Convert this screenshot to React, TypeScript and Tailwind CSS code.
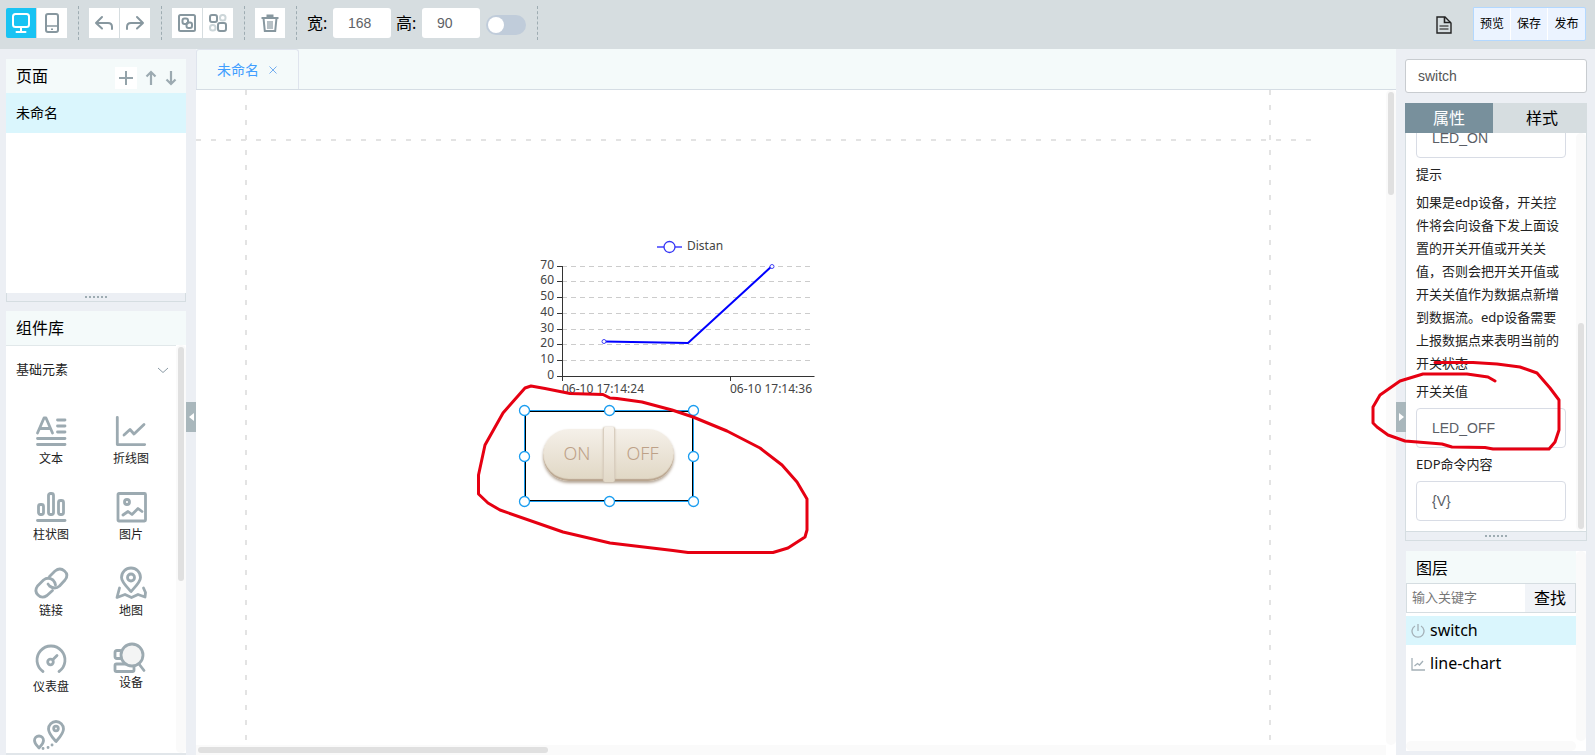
import React from "react";

type IconProps = { className?: string };

const cjk = "font-['Noto_Sans','Noto_Sans_CJK_SC',sans-serif]";
const arial = "font-['Liberation_Sans','Noto_Sans_CJK_SC',sans-serif]";

/* ---------- toolbar icons ---------- */

function DesktopIcon() {
  return (
    <svg width="20" height="20" viewBox="0 0 20 20" fill="none" stroke="currentColor" strokeWidth="2" strokeLinecap="round">
      <rect x="2" y="1" width="16" height="13" rx="2.5" />
      <path d="M10 14v4M5.500 19h9" />
    </svg>
  );
}

function PhoneIcon() {
  return (
    <svg width="20" height="20" viewBox="0 0 20 20" fill="none" stroke="currentColor" strokeWidth="2">
      <rect x="4" y="1" width="12" height="18" rx="2" />
      <path d="M4 13h12" strokeWidth="1.500" />
      <path d="M9 16.200h2" strokeWidth="1.500" />
    </svg>
  );
}

function UndoIcon() {
  return (
    <svg width="20" height="20" viewBox="0 0 20 20" fill="none" stroke="currentColor" strokeWidth="2" strokeLinecap="round" strokeLinejoin="round">
      <path d="M8 4L2 10l6 5.500M2 10h12q4 0 4 4v2" />
    </svg>
  );
}

function RedoIcon() {
  return (
    <svg width="20" height="20" viewBox="0 0 20 20" fill="none" stroke="currentColor" strokeWidth="2" strokeLinecap="round" strokeLinejoin="round">
      <path d="M12 4l6 6-6 5.500M18 10H6q-4 0-4 4v2" />
    </svg>
  );
}

function GroupIcon() {
  return (
    <svg width="20" height="20" viewBox="0 0 20 20" fill="none" stroke="currentColor" strokeWidth="2">
      <rect x="2" y="2" width="16" height="16" rx="1.500" />
      <rect x="5.500" y="5.500" width="5.500" height="5.500" rx="2" />
      <rect x="9.500" y="9.500" width="5.500" height="5.500" rx="2" />
    </svg>
  );
}

function UngroupIcon() {
  return (
    <svg width="20" height="20" viewBox="0 0 20 20" fill="none" stroke="currentColor" strokeWidth="2">
      <rect x="2" y="2" width="7" height="7" rx="2" />
      <rect x="10" y="10" width="8" height="8" rx="2" />
      <rect x="12" y="2" width="5.500" height="5.500" rx="2.500" stroke="#ccd6d9" />
      <rect x="2" y="12" width="5.500" height="5.500" rx="2.500" stroke="#ccd6d9" />
    </svg>
  );
}

function TrashIcon() {
  return (
    <svg width="20" height="20" viewBox="0 0 20 20" fill="none" stroke="currentColor" strokeWidth="2">
      <path d="M1.500 5h17M3.500 5l1.300 13h10.400l1.300-13" />
      <path d="M6.500 3h7" strokeWidth="3" />
      <path d="M8 8v8M10 8v8M12 8v8" strokeWidth="1.200" />
    </svg>
  );
}

function DocIcon() {
  return (
    <svg width="16" height="18" viewBox="0 0 16 18" fill="none" stroke="#222" strokeWidth="1.400">
      <path d="M1 1h8l6 6v10H1z" />
      <path d="M8.500 1v5.500H15" strokeWidth="1.600" />
      <path d="M3.500 10h9M3.500 13h9" stroke="#555" />
    </svg>
  );
}

/* ---------- component library icons ---------- */

const lib = {
  width: 32,
  height: 32,
  viewBox: "0 0 32 32",
  fill: "none",
  stroke: "#9caab1",
  strokeWidth: 2.8,
  strokeLinecap: "round" as const,
  strokeLinejoin: "round" as const,
  className: "overflow-visible",
};

const TextIcon = () => (
  <svg {...lib}>
    <path d="M2.500 18L9 3h2l6.500 15M5 13.500h10M22.500 5h7.500M22.500 11h7.500M22.500 17h7.500M2.500 23.500h27.500M2.500 29.500h27.500" />
  </svg>
);
const LineIcon = () => (
  <svg {...lib}>
    <path d="M2.300 2.300v27.300h27.400M9 20l6-5.500 4 4.500L29 9.500" />
  </svg>
);
const BarIcon = () => (
  <svg {...lib}>
    <rect x="3.500" y="13.500" width="5" height="10" rx="2" />
    <rect x="13.500" y="2.500" width="5" height="21" rx="2" />
    <rect x="23.500" y="9.500" width="5" height="14" rx="2" />
    <path d="M2.500 29.500h27.500" />
  </svg>
);
const ImageIcon = () => (
  <svg {...lib}>
    <rect x="3" y="2.500" width="27.500" height="27.500" rx="1" />
    <circle cx="12" cy="11" r="2.500" />
    <path d="M8 24l5-3.500 4 3 6-6 4 3" />
  </svg>
);
const LinkIcon = () => (
  <svg {...lib}>
    <path d="M14.500 9.500l5.500-5.500q5-4 9.500 0t.500 9l-5.500 6q-4.500 4-10 0l-1.500-2" />
    <path d="M17.500 23.500L12 28.500q-5 3.500-9-.500t-.500-9l6-6q4.500-3.500 9.500 0 2 2 2.500 5" />
  </svg>
);
const MapIcon = () => (
  <svg {...lib}>
    <path d="M16 24.500C11.500 19.500 6.500 15 6.500 10.500a9.500 9.500 0 0119 0C25.500 15 20.500 19.500 16 24.500z" />
    <circle cx="16" cy="10.500" r="3.500" />
    <path d="M4.500 21l-2.500 9.500 8-3 6.500 3 6.500-3 7 2.500.500-4.500-2-4.500" />
  </svg>
);
const GaugeIcon = () => (
  <svg {...lib}>
    <path d="M8 28.500A14 14 0 1124 28.500" />
    <circle cx="15.500" cy="19" r="2.800" />
    <path d="M18 16.500L22 12.500" />
  </svg>
);
const DeviceIcon = () => (
  <svg {...lib} height={28} viewBox="0 0 32 28">
    <path d="M5 7.500H2q-2 0-2 2v4q0 2 2 2h4" />
    <rect x="0" y="21" width="19" height="7.500" rx="1.500" />
    <circle cx="17" cy="12" r="11" fill="#f3f4f4" />
    <path d="M24 21l5 6.500" />
  </svg>
);
const RouteIcon = () => (
  <svg {...lib}>
    <path d="M21 22.500c-3.500-4-7.500-8-7.500-12.500a7.500 7.500 0 0115 0c0 4.500-4 8.500-7.500 12.500z" />
    <circle cx="21" cy="9.500" r="2.300" />
    <path d="M4 29c-2-2.500-4.500-4.500-4.500-7.500a4.500 4.500 0 019 0c0 3-2.500 5-4.500 7.500z" />
    <path d="M8 29.500h.1M13 28.500h.1M17 26h.1" />
  </svg>
);

const components: { name: string; Icon: () => React.ReactElement }[] = [
  { name: "文本", Icon: TextIcon },
  { name: "折线图", Icon: LineIcon },
  { name: "柱状图", Icon: BarIcon },
  { name: "图片", Icon: ImageIcon },
  { name: "链接", Icon: LinkIcon },
  { name: "地图", Icon: MapIcon },
  { name: "仪表盘", Icon: GaugeIcon },
  { name: "设备", Icon: DeviceIcon },
  { name: "", Icon: RouteIcon },
];

/* ---------- shared parts ---------- */

function ToolButton({ label, active, children }: { label: string; active?: boolean; children: React.ReactNode }) {
  return (
    <button
      aria-label={label}
      className={
        active
          ? "flex size-[30px] items-center justify-center rounded-l-xs bg-[#19c3f3] text-white"
          : "flex size-[30px] items-center justify-center bg-white text-[#87979f]"
      }
    >
      {children}
    </button>
  );
}

const Divider = () => <div className="ml-[11px] mr-[10px] h-[34px] border-l border-dashed border-[#9eacb2]" />;

function ResizeBar() {
  return (
    <div className="flex h-[9px] shrink-0 items-center justify-center gap-[2px] border border-t-0 border-[#d5dde1]">
      {[0, 1, 2, 3, 4, 5].map((n) => (
        <i key={n} className="size-[2px] bg-[#9eacb2]" />
      ))}
    </div>
  );
}

function Toolbar() {
  return (
    <header className="flex h-[49px] shrink-0 items-start bg-[#d6dde0] pl-[6px] pr-[9px] pt-[6px]">
      <div className="flex items-center">
        <div className="flex gap-px">
          <ToolButton label="桌面" active><DesktopIcon /></ToolButton>
          <ToolButton label="手机"><PhoneIcon /></ToolButton>
        </div>
        <Divider />
        <div className="flex gap-px">
          <ToolButton label="撤销"><UndoIcon /></ToolButton>
          <ToolButton label="重做"><RedoIcon /></ToolButton>
        </div>
        <Divider />
        <div className="flex gap-px">
          <ToolButton label="组合"><GroupIcon /></ToolButton>
          <ToolButton label="取消组合"><UngroupIcon /></ToolButton>
        </div>
        <Divider />
        <ToolButton label="删除"><TrashIcon /></ToolButton>
        <Divider />
        <label htmlFor="w" className="w-[26px] text-base leading-6">宽:</label>
        <input id="w" defaultValue="168" className={`h-[30px] w-[58px] rounded-[3px] bg-white pl-[15px] text-sm text-[#606266] ${arial}`} />
        <label htmlFor="h" className="ml-[5px] w-[26px] text-base leading-6">高:</label>
        <input id="h" defaultValue="90" className={`h-[30px] w-[58px] rounded-[3px] bg-white pl-[15px] text-sm text-[#606266] ${arial}`} />
        <input
          type="checkbox"
          aria-label="锁定比例"
          className="ml-[6px] mt-1 flex h-5 w-10 appearance-none items-center rounded-full bg-[#c0ccda] px-[2px] before:size-4 before:rounded-full before:bg-white"
        />
        <Divider />
      </div>
      <div className="ml-auto flex items-start">
        <button aria-label="文档" className="mr-[21px] mt-[10px]"><DocIcon /></button>
        <div className="mt-px flex divide-x divide-white rounded-r-xs border border-[#b3d8ff] bg-[#ebf3ff]">
          {["预览", "保存", "发布"].map((t) => (
            <button key={t} className="h-8 w-[37px] text-xs">{t}</button>
          ))}
        </div>
      </div>
    </header>
  );
}

function Arrow({ down }: { down?: boolean }) {
  return (
    <svg width="12" height="16" viewBox="0 0 12 16" fill="none" stroke="#9caab1" strokeWidth="2.200">
      <path d={down ? "M6 1v13M1.500 9.500L6 14l4.500-4.500" : "M6 15V2M1.500 6.500L6 2l4.500 4.500"} />
    </svg>
  );
}

function LeftSidebar() {
  return (
    <aside className="relative flex w-[196px] shrink-0 flex-col pl-[6px] pr-[10px] pt-[10px]">
      <section className="flex h-[243px] shrink-0 flex-col bg-[#eceff4]">
        <div className="flex h-[34px] items-center bg-[#f4fafa] pl-[10px] pr-[9px]">
          <h2 className="text-base">页面</h2>
          <div className="ml-auto flex items-center gap-2 pt-1">
            <button aria-label="新建页面" className="flex size-[22px] items-center justify-center bg-white">
              <svg width="14" height="14" viewBox="0 0 14 14" stroke="#94a3aa" strokeWidth="2"><path d="M7 0v14M0 7h14" /></svg>
            </button>
            <button aria-label="上移"><Arrow /></button>
            <button aria-label="下移"><Arrow down /></button>
          </div>
        </div>
        <div className="flex-1 bg-white">
          <div className="flex h-10 items-center bg-[#daf6fd] px-[10px] text-sm">未命名</div>
        </div>
        <ResizeBar />
      </section>
      <section className="mt-[9px] flex min-h-0 flex-1 flex-col bg-white">
        <h2 className="h-[34px] shrink-0 bg-[#f4fafa] px-[10px] text-base leading-[34px]">组件库</h2>
        <div className="flex min-h-0 flex-1 border-b-2 border-[#e1e6ea]">
          <div className="min-w-0 flex-1 overflow-hidden border-t border-[#e1e8ea]">
            <button className="flex h-12 w-full items-center justify-between pl-[10px] pr-[7px] text-[13px] text-[#222]">
              基础元素
              <svg width="12" height="7" viewBox="0 0 12 7" fill="none" stroke="#8a9aa5"><path d="M1 1l5 4.500L11 1" /></svg>
            </button>
            <div className="grid grid-cols-2 px-[5px] pt-[21px]">
              {components.map(({ name, Icon }, i) => (
                <button key={i} className="flex h-[76px] flex-col items-center text-xs leading-6 text-[#222]">
                  <Icon />
                  {name}
                </button>
              ))}
            </div>
          </div>
          <div className="w-[10px] rounded-full bg-[#fafafa] px-[2px] pt-[2px]">
            <div className="h-[234px] rounded-full bg-[#e0e0e0]" />
          </div>
        </div>
      </section>
      <button aria-label="收起左侧" className="absolute right-0 top-[353px] flex h-[30px] w-[10px] items-center justify-center bg-[#a9b7bc]">
        <svg width="5" height="8" viewBox="0 0 5 8"><path d="M5 0v8L0 4z" fill="#fff" /></svg>
      </button>
    </aside>
  );
}

/* ---------- canvas ---------- */

const ticks = [70, 60, 50, 40, 30, 20, 10, 0];
const tickY = [266.5, 281.5, 297.5, 313.5, 329.5, 344.5, 360.5, 376.5];

function LineChart() {
  return (
    <svg className={`absolute left-[334px] top-[140px] ${cjk}`} width="300" height="170" viewBox="530 230 300 170" fontSize="12" fill="#444">
      <path d="M657 247h25" stroke="#00f" strokeWidth="1.500" opacity=".75" />
      <circle cx="669.500" cy="247" r="5.500" fill="#fff" stroke="#3535f5" strokeWidth="1.300" />
      <text x="687" y="250">Distan</text>
      {ticks.map((t, i) => (
        <g key={t}>
          {t > 0 && <path d={`M562 ${tickY[i]}H814`} stroke="#ccc" strokeDasharray="5 4" />}
          <path d={`M557 ${tickY[i]}h5`} stroke="#333" />
          <text x="554" y={tickY[i] + 2.5} textAnchor="end">{t}</text>
        </g>
      ))}
      <path d="M562.500 266v115M562 376.500h252.500M730.500 377v4" stroke="#333" fill="none" />
      <text x="603" y="393" textAnchor="middle">06-10 17:14:24</text>
      <text x="771" y="393" textAnchor="middle">06-10 17:14:36</text>
      <path d="M604 341.500L688 343L772 266" stroke="#00f" strokeWidth="2" fill="none" />
      <circle cx="604" cy="341.500" r="2" fill="#fff" stroke="#4040f5" />
      <circle cx="772" cy="266.500" r="2" fill="#fff" stroke="#4040f5" />
    </svg>
  );
}

const handles = [
  [6.5, 6.5], [91.5, 6.5], [175.5, 6.5],
  [6.5, 52.5], [175.5, 52.5],
  [6.5, 97.5], [91.5, 97.5], [175.5, 97.5],
];

function SwitchWidget() {
  return (
    <div className="absolute left-[322px] top-[314px] h-[105px] w-[183px]">
      <button
        aria-label="switch"
        className="absolute left-[25px] top-[25px] flex h-[52px] w-[131px] items-center rounded-[26px] bg-linear-to-b from-[#f5f0e9] to-[#e0d7c4] text-lg text-[#bda188] shadow-[inset_0_-2px_1px_#b9a58f,0_2px_3px_#b5a798]"
      >
        <span className="w-[68px] pb-1 font-light">ON</span>
        <span className="w-[63px] pb-1 font-light">OFF</span>
        <span className="absolute -top-[2px] left-[60px] h-[55px] w-3 rounded-xs border-x border-[#d9cebf] bg-linear-to-b from-[#f6f1ea] to-[#e2d9c8] shadow-[0_0_2px_#c4b6a4]" />
      </button>
      <svg className="pointer-events-none absolute inset-0" width="183" height="105" fill="none">
        <path d="M6.500 6.500h169v91h-169z" stroke="#1a9df0" />
        <path d="M7.500 7.500h167v89h-167z" stroke="#000" />
        {handles.map(([x, y]) => (
          <circle key={`${x}-${y}`} cx={x} cy={y} r="5" fill="#fff" stroke="#1a9df0" strokeWidth="1.300" />
        ))}
      </svg>
    </div>
  );
}

function Workspace() {
  return (
    <main className="flex min-w-0 flex-1 flex-col bg-white">
      <div className="flex h-[41px] shrink-0 items-stretch border-b border-[#d5dde4] bg-[#f4fafa]">
        <button className="flex w-[103px] items-center gap-[10px] rounded-t-[3px] border border-b-0 border-[#dfe4ed] pl-5 text-sm text-[#409eff]">
          未命名
          <svg width="8" height="8" viewBox="0 0 8 8" stroke="#74aef0"><path d="M.500.500l7 7M7.500.500l-7 7" /></svg>
        </button>
      </div>
      <div className="flex min-h-0 flex-1">
        <div className="relative min-w-0 flex-1 overflow-hidden">
          <div className="absolute inset-y-0 left-[49px] w-[2px] bg-[repeating-linear-gradient(to_bottom,#e3e3e3_0_5px,transparent_5px_15px)]" />
          <div className="absolute inset-y-0 left-[1073px] w-[2px] bg-[repeating-linear-gradient(to_bottom,#e3e3e3_0_5px,transparent_5px_15px)]" />
          <div className="absolute left-0 top-[49px] h-[2px] w-[1116px] bg-[repeating-linear-gradient(to_right,#e3e3e3_0_5px,transparent_5px_15px)]" />
          <LineChart />
          <SwitchWidget />
          <svg className="pointer-events-none absolute left-[274px] top-[285px]" width="350" height="190" viewBox="470 375 350 190" fill="none" stroke="#e60012" strokeWidth="3" strokeLinejoin="round">
            <path d="M531 386L545 388.500L570 393.500L603 394.500L610 398L617 398.500L642 402L672 410L693 417L727 431L760 448L782 465L797 482L807 499L807 530L805 537L788 548L773 552.500L688 552.500L673 550.500L610 543L563 532L500 510L488 503L478.500 494L478.500 475L485 445L503 413L525 388Z" />
          </svg>
        </div>
        <div className="w-[10px] rounded-full bg-[#fafafa] px-[2px] pt-[2px]">
          <div className="h-[103px] rounded-full bg-[#e0e0e0]" />
        </div>
      </div>
      <div className="mr-[10px] h-[10px] shrink-0 bg-[#fafafa] p-[2px]">
        <div className="h-[6px] w-[350px] rounded-full bg-[#e0e0e0]" />
      </div>
    </main>
  );
}

/* ---------- right side ---------- */

const field = `h-10 w-full shrink-0 rounded-[4px] border border-[#d8dce5] bg-white px-[15px] text-sm text-[#5a5e66] ${arial}`;

function PowerIcon({ className }: IconProps) {
  return (
    <svg className={className} width="14" height="14" viewBox="0 0 14 14" fill="none" stroke="#a4b0b7" strokeWidth="1.300">
      <path d="M4 2a6 6 0 106 0M7 0v7" />
    </svg>
  );
}

function SmallLineIcon({ className }: IconProps) {
  return (
    <svg className={className} width="14" height="14" viewBox="0 0 14 14" fill="none" stroke="#a4b0b7" strokeWidth="1.300">
      <path d="M1 1v12h13M3.500 9l3-2.500L8.500 8 12 4" />
    </svg>
  );
}

function RightSidebar() {
  return (
    <aside className="relative flex w-[199px] shrink-0 flex-col pb-1 pl-[9px] pr-2 pt-[10px]">
      <input aria-label="名称" defaultValue="switch" className={`h-[34px] w-full shrink-0 rounded-[3px] border border-[#c8ccd0] bg-white px-3 text-sm text-[#555] ${arial}`} />
      <div className="mt-[10px] flex h-[30px] shrink-0 text-base">
        <button className="w-[88px] bg-[#78909c] text-white">属性</button>
        <button className="flex-1 bg-[#d6dde0] pl-1">样式</button>
      </div>
      <section className="flex min-h-0 flex-1 border-x border-b border-[#d5dde1] bg-white">
        <div className="flex min-w-0 flex-1 flex-col justify-end gap-[5px] overflow-hidden px-[10px] pb-[10px] text-[13px] leading-[23px] text-[#222]">
          <input aria-label="开关开值" defaultValue="LED_ON" className={field} />
          <p className="shrink-0">提示</p>
          <p className="w-[145px] shrink-0">
            如果是edp设备，开关控件将会向设备下发上面设置的开关开值或开关关值，否则会把开关开值或开关关值作为数据点新增到数据流。edp设备需要上报数据点来表明当前的开关状态
          </p>
          <label htmlFor="off" className="shrink-0">开关关值</label>
          <input id="off" defaultValue="LED_OFF" className={field} />
          <label htmlFor="cmd" className="shrink-0">EDP命令内容</label>
          <input id="cmd" defaultValue="{V}" className={field} />
        </div>
        <div className="flex w-[10px] flex-col justify-end rounded-full bg-[#fafafa] px-[2px] pb-[2px]">
          <div className="h-[206px] rounded-full bg-[#e0e0e0]" />
        </div>
      </section>
      <ResizeBar />
      <section className="mx-px mt-[10px] flex h-[200px] shrink-0 bg-white">
        <div className="flex min-w-0 flex-1 flex-col">
          <h2 className="h-8 bg-[#f4fafa] px-[10px] text-base leading-[34px]">图层</h2>
          <div className="flex h-[30px] border border-[#d5dde1]">
            <input aria-label="输入关键字" placeholder="输入关键字" className="min-w-0 flex-1 bg-white pl-[5px] text-[13px] placeholder:text-[#777]" />
            <button className="w-[50px] bg-[#f1f4f8] text-base">查找</button>
          </div>
          <ul className="mt-[3px] flex flex-col gap-1 text-base leading-[29px]">
            <li className="flex items-center gap-[5px] bg-[#daf6fd] pl-[5px]"><PowerIcon />switch</li>
            <li className="flex items-center gap-[5px] pl-[5px]"><SmallLineIcon />line-chart</li>
          </ul>
          <div className="mt-auto h-[10px] rounded-full bg-[#fafafa]" />
        </div>
        <div className="mb-[10px] w-[10px] rounded-full bg-[#fafafa]" />
      </section>
      <button aria-label="收起右侧" className="absolute left-0 top-[353px] flex h-[30px] w-[10px] items-center justify-center bg-[#a9b7bc]">
        <svg width="5" height="8" viewBox="0 0 5 8"><path d="M0 0v8l5-4z" fill="#fff" /></svg>
      </button>
      <svg className="pointer-events-none absolute -left-[31px] top-[306px]" width="205" height="105" viewBox="1365 355 205 105" fill="none" stroke="#e60012" strokeWidth="3" strokeLinecap="round" strokeLinejoin="round">
        <path d="M1435 362.500L1473 362.500L1497 364L1520 367L1537 373L1550 388L1559 400L1559 430L1555 442L1549 449L1493 449L1485 447.500L1452 447L1442 444L1405 441L1388 435L1377 427L1373 423L1373 407L1380 395L1400 381L1423 374L1467 374L1488 377L1495 381" />
      </svg>
    </aside>
  );
}

export default function App() {
  return (
    <div className={`flex h-screen flex-col overflow-hidden bg-[#eceff4] text-black ${cjk}`}>
      <Toolbar />
      <div className="flex min-h-0 flex-1">
        <LeftSidebar />
        <Workspace />
        <RightSidebar />
      </div>
    </div>
  );
}
